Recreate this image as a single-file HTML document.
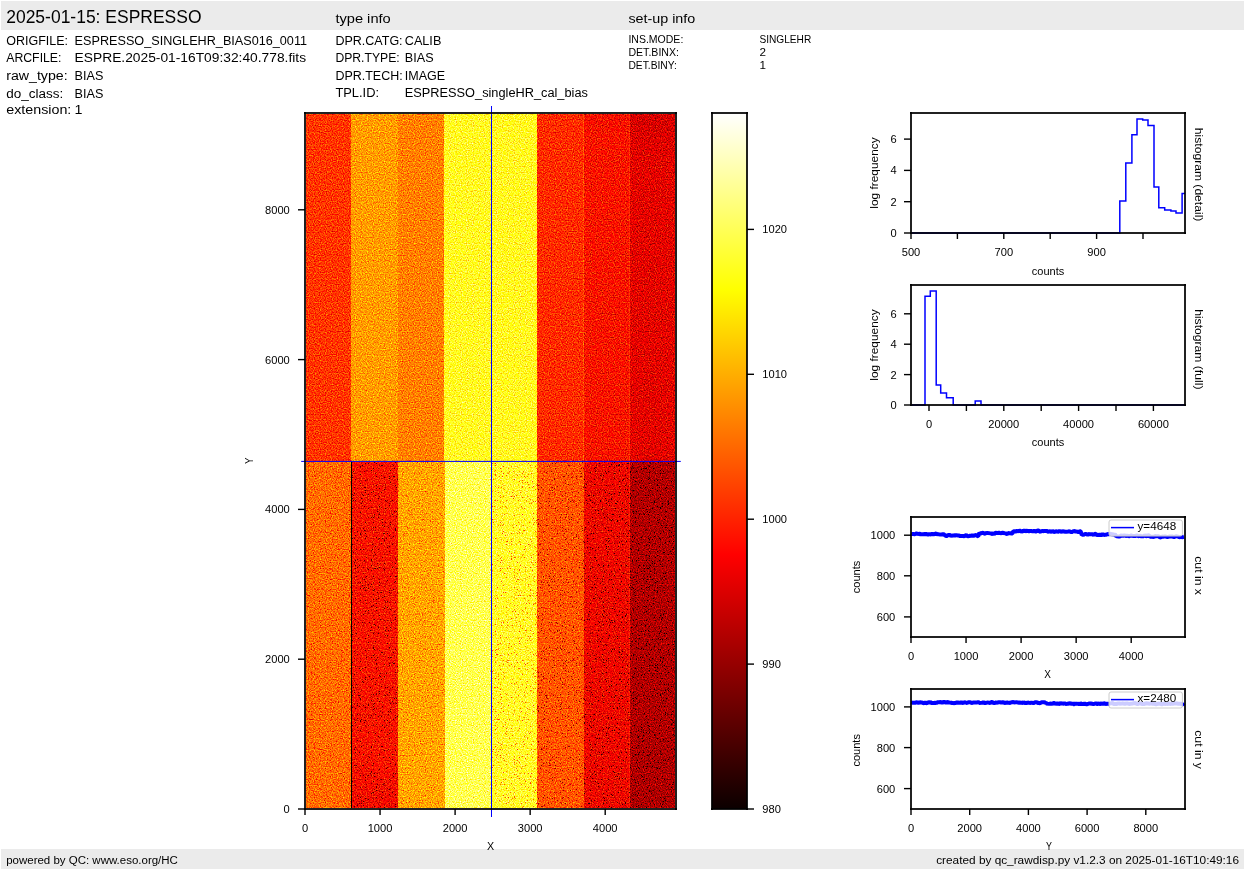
<!DOCTYPE html>
<html><head><meta charset="utf-8"><title>ESPRESSO raw display</title>
<style>
html,body{margin:0;padding:0;background:#fff;}
body{width:1245px;height:870px;overflow:hidden;}
svg{display:block;will-change:transform;}
text{font-family:"Liberation Sans",sans-serif;}
</style></head><body>
<svg width="1245" height="870" viewBox="0 0 1245 870">
<rect x="0" y="0" width="1245" height="870" fill="#fff"/>
<rect x="1" y="1" width="1243" height="29" fill="#ebebeb"/>
<rect x="1" y="849" width="1243" height="20" fill="#ebebeb"/>
<text x="6.20" y="23.00" font-size="17.67" text-anchor="start" textLength="195.36" lengthAdjust="spacingAndGlyphs" fill="#000">2025-01-15: ESPRESSO</text>
<text x="335.40" y="22.80" font-size="13.25" text-anchor="start" textLength="55.34" lengthAdjust="spacingAndGlyphs" fill="#000">type info</text>
<text x="628.40" y="22.70" font-size="13.25" text-anchor="start" textLength="66.89" lengthAdjust="spacingAndGlyphs" fill="#000">set-up info</text>
<text x="6.20" y="44.90" font-size="13.25" text-anchor="start" textLength="61.85" lengthAdjust="spacingAndGlyphs" fill="#000">ORIGFILE:</text>
<text x="74.60" y="44.90" font-size="13.25" text-anchor="start" textLength="232.43" lengthAdjust="spacingAndGlyphs" fill="#000">ESPRESSO_SINGLEHR_BIAS016_0011</text>
<text x="6.20" y="61.90" font-size="13.25" text-anchor="start" textLength="55.29" lengthAdjust="spacingAndGlyphs" fill="#000">ARCFILE:</text>
<text x="74.60" y="61.90" font-size="13.25" text-anchor="start" textLength="231.44" lengthAdjust="spacingAndGlyphs" fill="#000">ESPRE.2025-01-16T09:32:40.778.fits</text>
<text x="6.20" y="79.80" font-size="13.25" text-anchor="start" textLength="61.41" lengthAdjust="spacingAndGlyphs" fill="#000">raw_type:</text>
<text x="74.60" y="79.80" font-size="13.25" text-anchor="start" textLength="28.75" lengthAdjust="spacingAndGlyphs" fill="#000">BIAS</text>
<text x="6.20" y="97.80" font-size="13.25" text-anchor="start" textLength="57.07" lengthAdjust="spacingAndGlyphs" fill="#000">do_class:</text>
<text x="74.60" y="97.80" font-size="13.25" text-anchor="start" textLength="28.75" lengthAdjust="spacingAndGlyphs" fill="#000">BIAS</text>
<text x="6.20" y="113.90" font-size="13.25" text-anchor="start" textLength="65.15" lengthAdjust="spacingAndGlyphs" fill="#000">extension:</text>
<text x="74.60" y="113.90" font-size="13.25" text-anchor="start" textLength="7.95" lengthAdjust="spacingAndGlyphs" fill="#000">1</text>
<text x="335.40" y="45.10" font-size="13.25" text-anchor="start" textLength="67.22" lengthAdjust="spacingAndGlyphs" fill="#000">DPR.CATG:</text>
<text x="404.80" y="45.10" font-size="13.25" text-anchor="start" textLength="36.51" lengthAdjust="spacingAndGlyphs" fill="#000">CALIB</text>
<text x="335.40" y="61.80" font-size="13.25" text-anchor="start" textLength="64.29" lengthAdjust="spacingAndGlyphs" fill="#000">DPR.TYPE:</text>
<text x="404.80" y="61.80" font-size="13.25" text-anchor="start" textLength="28.75" lengthAdjust="spacingAndGlyphs" fill="#000">BIAS</text>
<text x="335.40" y="80.10" font-size="13.25" text-anchor="start" textLength="67.25" lengthAdjust="spacingAndGlyphs" fill="#000">DPR.TECH:</text>
<text x="404.80" y="80.10" font-size="13.25" text-anchor="start" textLength="40.39" lengthAdjust="spacingAndGlyphs" fill="#000">IMAGE</text>
<text x="335.40" y="96.90" font-size="13.25" text-anchor="start" textLength="43.63" lengthAdjust="spacingAndGlyphs" fill="#000">TPL.ID:</text>
<text x="404.80" y="96.90" font-size="13.25" text-anchor="start" textLength="183.09" lengthAdjust="spacingAndGlyphs" fill="#000">ESPRESSO_singleHR_cal_bias</text>
<text x="628.40" y="43.00" font-size="10.81" text-anchor="start" textLength="54.92" lengthAdjust="spacingAndGlyphs" fill="#000">INS.MODE:</text>
<text x="759.40" y="43.00" font-size="10.81" text-anchor="start" textLength="51.90" lengthAdjust="spacingAndGlyphs" fill="#000">SINGLEHR</text>
<text x="628.40" y="55.90" font-size="10.81" text-anchor="start" textLength="50.62" lengthAdjust="spacingAndGlyphs" fill="#000">DET.BINX:</text>
<text x="759.40" y="55.90" font-size="10.81" text-anchor="start" textLength="6.49" lengthAdjust="spacingAndGlyphs" fill="#000">2</text>
<text x="628.40" y="68.80" font-size="10.81" text-anchor="start" textLength="48.51" lengthAdjust="spacingAndGlyphs" fill="#000">DET.BINY:</text>
<text x="759.40" y="68.80" font-size="10.81" text-anchor="start" textLength="6.49" lengthAdjust="spacingAndGlyphs" fill="#000">1</text>
<text x="6.20" y="864.00" font-size="11.05" text-anchor="start" textLength="171.69" lengthAdjust="spacingAndGlyphs" fill="#000">powered by QC: www.eso.org/HC</text>
<text x="1239.00" y="863.80" font-size="11.05" text-anchor="end" textLength="302.80" lengthAdjust="spacingAndGlyphs" fill="#000">created by qc_rawdisp.py v1.2.3 on 2025-01-16T10:49:16</text>
<defs><filter id="hm" x="306" y="114" width="369" height="694" filterUnits="userSpaceOnUse" color-interpolation-filters="sRGB"><feColorMatrix in="SourceGraphic" type="matrix" values="1 0 0 0 0  1 0 0 0 0  1 0 0 0 0  0 0 0 0 1" result="tt"/><feColorMatrix in="SourceGraphic" type="matrix" values="0 1 0 0 0  0 1 0 0 0  0 1 0 0 0  0 0 0 0 1" result="ss"/><feTurbulence type="fractalNoise" baseFrequency="0.83" numOctaves="1" seed="7" result="nz"/><feColorMatrix in="nz" type="matrix" values="1 0 0 0 0  1 0 0 0 0  1 0 0 0 0  0 0 0 0 1" result="ng"/><feComposite in="tt" in2="ng" operator="arithmetic" k1="0" k2="1" k3="0.55" k4="-0.2750" result="sum"/><feTurbulence type="fractalNoise" baseFrequency="1.37" numOctaves="1" seed="23" result="nz2"/><feColorMatrix in="nz2" type="matrix" values="0 25.0 0 0 -16.8  0 25.0 0 0 -16.8  0 25.0 0 0 -16.8  0 0 0 0 1" result="spk"/><feComposite in="spk" in2="ss" operator="arithmetic" k1="1" k2="0" k3="0" k4="0" result="spk2"/><feColorMatrix in="spk2" type="matrix" values="-1.0 0 0 0 1  -1.0 0 0 0 1  -1.0 0 0 0 1  0 0 0 0 1" result="mm"/><feComposite in="sum" in2="mm" operator="arithmetic" k1="1" k2="0" k3="0" k4="0" result="sum2"/><feComponentTransfer in="sum2"><feFuncR type="table" tableValues="0.0416 0.0621 0.0826 0.1031 0.1236 0.1441 0.1647 0.1852 0.2057 0.2262 0.2467 0.2672 0.2877 0.3082 0.3287 0.3492 0.3697 0.3903 0.4108 0.4313 0.4518 0.4723 0.4928 0.5133 0.5338 0.5543 0.5748 0.5954 0.6159 0.6364 0.6569 0.6774 0.6979 0.7184 0.7389 0.7594 0.7799 0.8004 0.8210 0.8415 0.8620 0.8825 0.9030 0.9235 0.9440 0.9645 0.9850 1.0000 1.0000 1.0000 1.0000 1.0000 1.0000 1.0000 1.0000 1.0000 1.0000 1.0000 1.0000 1.0000 1.0000 1.0000 1.0000 1.0000 1.0000 1.0000 1.0000 1.0000 1.0000 1.0000 1.0000 1.0000 1.0000 1.0000 1.0000 1.0000 1.0000 1.0000 1.0000 1.0000 1.0000 1.0000 1.0000 1.0000 1.0000 1.0000 1.0000 1.0000 1.0000 1.0000 1.0000 1.0000 1.0000 1.0000 1.0000 1.0000 1.0000 1.0000 1.0000 1.0000 1.0000 1.0000 1.0000 1.0000 1.0000 1.0000 1.0000 1.0000 1.0000 1.0000 1.0000 1.0000 1.0000 1.0000 1.0000 1.0000 1.0000 1.0000 1.0000 1.0000 1.0000 1.0000 1.0000 1.0000 1.0000 1.0000 1.0000 1.0000 1.0000"/><feFuncG type="table" tableValues="0.0000 0.0000 0.0000 0.0000 0.0000 0.0000 0.0000 0.0000 0.0000 0.0000 0.0000 0.0000 0.0000 0.0000 0.0000 0.0000 0.0000 0.0000 0.0000 0.0000 0.0000 0.0000 0.0000 0.0000 0.0000 0.0000 0.0000 0.0000 0.0000 0.0000 0.0000 0.0000 0.0000 0.0000 0.0000 0.0000 0.0000 0.0000 0.0000 0.0000 0.0000 0.0000 0.0000 0.0000 0.0000 0.0000 0.0000 0.0055 0.0260 0.0466 0.0671 0.0876 0.1081 0.1286 0.1491 0.1696 0.1901 0.2106 0.2311 0.2516 0.2721 0.2926 0.3132 0.3337 0.3542 0.3747 0.3952 0.4157 0.4362 0.4567 0.4772 0.4977 0.5182 0.5387 0.5592 0.5798 0.6003 0.6208 0.6413 0.6618 0.6823 0.7028 0.7233 0.7438 0.7643 0.7848 0.8053 0.8258 0.8464 0.8669 0.8874 0.9079 0.9284 0.9489 0.9694 0.9899 1.0000 1.0000 1.0000 1.0000 1.0000 1.0000 1.0000 1.0000 1.0000 1.0000 1.0000 1.0000 1.0000 1.0000 1.0000 1.0000 1.0000 1.0000 1.0000 1.0000 1.0000 1.0000 1.0000 1.0000 1.0000 1.0000 1.0000 1.0000 1.0000 1.0000 1.0000 1.0000 1.0000"/><feFuncB type="table" tableValues="0.0000 0.0000 0.0000 0.0000 0.0000 0.0000 0.0000 0.0000 0.0000 0.0000 0.0000 0.0000 0.0000 0.0000 0.0000 0.0000 0.0000 0.0000 0.0000 0.0000 0.0000 0.0000 0.0000 0.0000 0.0000 0.0000 0.0000 0.0000 0.0000 0.0000 0.0000 0.0000 0.0000 0.0000 0.0000 0.0000 0.0000 0.0000 0.0000 0.0000 0.0000 0.0000 0.0000 0.0000 0.0000 0.0000 0.0000 0.0000 0.0000 0.0000 0.0000 0.0000 0.0000 0.0000 0.0000 0.0000 0.0000 0.0000 0.0000 0.0000 0.0000 0.0000 0.0000 0.0000 0.0000 0.0000 0.0000 0.0000 0.0000 0.0000 0.0000 0.0000 0.0000 0.0000 0.0000 0.0000 0.0000 0.0000 0.0000 0.0000 0.0000 0.0000 0.0000 0.0000 0.0000 0.0000 0.0000 0.0000 0.0000 0.0000 0.0000 0.0000 0.0000 0.0000 0.0000 0.0000 0.0156 0.0464 0.0771 0.1079 0.1387 0.1694 0.2002 0.2310 0.2617 0.2925 0.3232 0.3540 0.3848 0.4155 0.4463 0.4771 0.5078 0.5386 0.5693 0.6001 0.6309 0.6616 0.6924 0.7231 0.7539 0.7847 0.8154 0.8462 0.8770 0.9077 0.9385 0.9692 1.0000"/><feFuncA type="linear" slope="0" intercept="1"/></feComponentTransfer></filter></defs><g filter="url(#hm)"><rect x="306" y="114" width="45" height="348" fill="rgb(44.375%,8.000%,0%)"/><rect x="306" y="462" width="45" height="346" fill="rgb(53.125%,30.000%,0%)"/><rect x="351" y="114" width="47" height="348" fill="rgb(60.000%,5.000%,0%)"/><rect x="351" y="462" width="47" height="346" fill="rgb(38.542%,78.000%,0%)"/><rect x="398" y="114" width="46" height="348" fill="rgb(55.833%,8.000%,0%)"/><rect x="398" y="462" width="47" height="346" fill="rgb(61.458%,25.000%,0%)"/><rect x="444" y="114" width="47" height="348" fill="rgb(77.083%,3.000%,0%)"/><rect x="445" y="462" width="46" height="346" fill="rgb(83.333%,10.000%,0%)"/><rect x="491" y="114" width="46" height="348" fill="rgb(76.667%,3.000%,0%)"/><rect x="491" y="462" width="46" height="346" fill="rgb(78.125%,38.000%,0%)"/><rect x="537" y="114" width="47" height="348" fill="rgb(42.917%,10.000%,0%)"/><rect x="537" y="462" width="47" height="346" fill="rgb(49.583%,60.000%,0%)"/><rect x="584" y="114" width="46" height="348" fill="rgb(38.542%,15.000%,0%)"/><rect x="584" y="462" width="46" height="346" fill="rgb(35.417%,85.000%,0%)"/><rect x="630" y="114" width="45" height="348" fill="rgb(33.333%,22.000%,0%)"/><rect x="630" y="462" width="45" height="346" fill="rgb(25.000%,100.000%,0%)"/><rect x="583" y="114" width="1" height="348" fill="rgb(49.167%,10.000%,0%)"/><rect x="629" y="114" width="1" height="348" fill="rgb(43.750%,15.000%,0%)"/><rect x="629" y="462" width="1" height="346" fill="rgb(40.625%,85.000%,0%)"/><defs><linearGradient id="g21" x1="0" y1="0" x2="0" y2="1"><stop offset="0" stop-color="#000" stop-opacity="0.08"/><stop offset="1" stop-color="#000" stop-opacity="0"/></linearGradient></defs><rect x="630" y="114" width="45" height="51" fill="url(#g21)"/><defs><linearGradient id="g23" x1="0" y1="0" x2="0" y2="1"><stop offset="0" stop-color="#000" stop-opacity="0.03"/><stop offset="1" stop-color="#000" stop-opacity="0"/></linearGradient></defs><rect x="584" y="114" width="46" height="26" fill="url(#g23)"/><defs><linearGradient id="g25" x1="0" y1="0" x2="0" y2="1"><stop offset="0" stop-color="#000" stop-opacity="0"/><stop offset="1" stop-color="#000" stop-opacity="0.06"/></linearGradient></defs><rect x="352" y="760" width="46" height="48" fill="url(#g25)"/><defs><linearGradient id="g27" x1="0" y1="0" x2="0" y2="1"><stop offset="0" stop-color="#000" stop-opacity="0"/><stop offset="1" stop-color="#000" stop-opacity="0.03"/></linearGradient></defs><rect x="630" y="700" width="45" height="108" fill="url(#g27)"/></g>
<line x1="351.5" y1="461.5" x2="351.5" y2="808" stroke="#000" stroke-width="1.0"/>
<line x1="301.2" y1="461.4" x2="680.8" y2="461.4" stroke="#0000ff" stroke-width="1.0"/>
<line x1="491.5" y1="106" x2="491.5" y2="817" stroke="#0000ff" stroke-width="1.0"/>
<line x1="305" y1="112" x2="305" y2="810" stroke="#000" stroke-width="2" stroke-opacity="0.87"/>
<line x1="676" y1="112" x2="676" y2="810" stroke="#000" stroke-width="2" stroke-opacity="0.87"/>
<line x1="304" y1="113" x2="677" y2="113" stroke="#000" stroke-width="2" stroke-opacity="0.87"/>
<line x1="304" y1="809" x2="677" y2="809" stroke="#000" stroke-width="2" stroke-opacity="0.87"/>
<line x1="305.0" y1="809" x2="305.0" y2="815" stroke="#000" stroke-width="1.4"/>
<text x="305.00" y="831.80" font-size="10.30" text-anchor="middle" textLength="6.18" lengthAdjust="spacingAndGlyphs" fill="#000">0</text>
<line x1="380.05" y1="809" x2="380.05" y2="815" stroke="#000" stroke-width="1.4"/>
<text x="380.05" y="831.80" font-size="10.30" text-anchor="middle" textLength="24.74" lengthAdjust="spacingAndGlyphs" fill="#000">1000</text>
<line x1="455.1" y1="809" x2="455.1" y2="815" stroke="#000" stroke-width="1.4"/>
<text x="455.10" y="831.80" font-size="10.30" text-anchor="middle" textLength="24.74" lengthAdjust="spacingAndGlyphs" fill="#000">2000</text>
<line x1="530.15" y1="809" x2="530.15" y2="815" stroke="#000" stroke-width="1.4"/>
<text x="530.15" y="831.80" font-size="10.30" text-anchor="middle" textLength="24.74" lengthAdjust="spacingAndGlyphs" fill="#000">3000</text>
<line x1="605.2" y1="809" x2="605.2" y2="815" stroke="#000" stroke-width="1.4"/>
<text x="605.20" y="831.80" font-size="10.30" text-anchor="middle" textLength="24.74" lengthAdjust="spacingAndGlyphs" fill="#000">4000</text>
<line x1="298" y1="809.0" x2="305" y2="809.0" stroke="#000" stroke-width="1.4"/>
<text x="289.80" y="812.90" font-size="10.30" text-anchor="end" textLength="6.18" lengthAdjust="spacingAndGlyphs" fill="#000">0</text>
<line x1="298" y1="659.2" x2="305" y2="659.2" stroke="#000" stroke-width="1.4"/>
<text x="289.80" y="663.10" font-size="10.30" text-anchor="end" textLength="24.74" lengthAdjust="spacingAndGlyphs" fill="#000">2000</text>
<line x1="298" y1="509.4" x2="305" y2="509.4" stroke="#000" stroke-width="1.4"/>
<text x="289.80" y="513.30" font-size="10.30" text-anchor="end" textLength="24.74" lengthAdjust="spacingAndGlyphs" fill="#000">4000</text>
<line x1="298" y1="359.59999999999997" x2="305" y2="359.59999999999997" stroke="#000" stroke-width="1.4"/>
<text x="289.80" y="363.50" font-size="10.30" text-anchor="end" textLength="24.74" lengthAdjust="spacingAndGlyphs" fill="#000">6000</text>
<line x1="298" y1="209.79999999999995" x2="305" y2="209.79999999999995" stroke="#000" stroke-width="1.4"/>
<text x="289.80" y="213.70" font-size="10.30" text-anchor="end" textLength="24.74" lengthAdjust="spacingAndGlyphs" fill="#000">8000</text>
<text x="490.60" y="849.70" font-size="11.05" text-anchor="middle" textLength="7.14" lengthAdjust="spacingAndGlyphs" fill="#000">X</text>
<text x="252.80" y="460.80" font-size="11.05" text-anchor="middle" textLength="6.36" lengthAdjust="spacingAndGlyphs" fill="#000" transform="rotate(-90 252.8 460.8)">Y</text>
<defs><linearGradient id="hot" x1="0" y1="1" x2="0" y2="0"><stop offset="0" stop-color="#0b0000"/><stop offset="0.365" stop-color="#ff0000"/><stop offset="0.746" stop-color="#ffff00"/><stop offset="1" stop-color="#ffffff"/></linearGradient></defs>
<rect x="712" y="113" width="35" height="696" fill="url(#hot)"/>
<line x1="712" y1="112" x2="712" y2="810" stroke="#000" stroke-width="2" stroke-opacity="0.87"/>
<line x1="747" y1="112" x2="747" y2="810" stroke="#000" stroke-width="2" stroke-opacity="0.87"/>
<line x1="711" y1="113" x2="748" y2="113" stroke="#000" stroke-width="2" stroke-opacity="0.87"/>
<line x1="711" y1="809" x2="748" y2="809" stroke="#000" stroke-width="2" stroke-opacity="0.87"/>
<line x1="747" y1="809.0" x2="754" y2="809.0" stroke="#000" stroke-width="1.4"/>
<text x="762.30" y="812.90" font-size="10.30" text-anchor="start" textLength="18.55" lengthAdjust="spacingAndGlyphs" fill="#000">980</text>
<line x1="747" y1="664.1" x2="754" y2="664.1" stroke="#000" stroke-width="1.4"/>
<text x="762.30" y="668.00" font-size="10.30" text-anchor="start" textLength="18.55" lengthAdjust="spacingAndGlyphs" fill="#000">990</text>
<line x1="747" y1="519.2" x2="754" y2="519.2" stroke="#000" stroke-width="1.4"/>
<text x="762.30" y="523.10" font-size="10.30" text-anchor="start" textLength="24.74" lengthAdjust="spacingAndGlyphs" fill="#000">1000</text>
<line x1="747" y1="374.29999999999995" x2="754" y2="374.29999999999995" stroke="#000" stroke-width="1.4"/>
<text x="762.30" y="378.20" font-size="10.30" text-anchor="start" textLength="24.74" lengthAdjust="spacingAndGlyphs" fill="#000">1010</text>
<line x1="747" y1="229.39999999999998" x2="754" y2="229.39999999999998" stroke="#000" stroke-width="1.4"/>
<text x="762.30" y="233.30" font-size="10.30" text-anchor="start" textLength="24.74" lengthAdjust="spacingAndGlyphs" fill="#000">1020</text>
<polyline fill="none" stroke="#0000ff" stroke-width="1.5" points="911,233 1119.8,233 1119.8,201.1 1125.8,201.1 1125.8,163 1131.9,163 1131.9,134.8 1137,134.8 1137,119 1142.7,119 1142.7,120 1148,120 1148,125.6 1154,125.6 1154,187.1 1158.8,187.1 1158.8,207.7 1164.7,207.7 1164.7,210 1170.9,210 1170.9,211 1176,211 1176,212.9 1182.1,212.9 1182.1,193.6 1185,193.6"/>
<line x1="911" y1="112" x2="911" y2="234" stroke="#000" stroke-width="2" stroke-opacity="0.87"/>
<line x1="1185" y1="112" x2="1185" y2="234" stroke="#000" stroke-width="2" stroke-opacity="0.87"/>
<line x1="910" y1="113" x2="1186" y2="113" stroke="#000" stroke-width="2" stroke-opacity="0.87"/>
<line x1="910" y1="233" x2="1186" y2="233" stroke="#000" stroke-width="2" stroke-opacity="0.87"/>
<line x1="904" y1="233.0" x2="911" y2="233.0" stroke="#000" stroke-width="1.4"/>
<text x="896.80" y="236.90" font-size="10.30" text-anchor="end" textLength="6.18" lengthAdjust="spacingAndGlyphs" fill="#000">0</text>
<line x1="904" y1="201.7" x2="911" y2="201.7" stroke="#000" stroke-width="1.4"/>
<text x="896.80" y="205.60" font-size="10.30" text-anchor="end" textLength="6.18" lengthAdjust="spacingAndGlyphs" fill="#000">2</text>
<line x1="904" y1="170.4" x2="911" y2="170.4" stroke="#000" stroke-width="1.4"/>
<text x="896.80" y="174.30" font-size="10.30" text-anchor="end" textLength="6.18" lengthAdjust="spacingAndGlyphs" fill="#000">4</text>
<line x1="904" y1="139.1" x2="911" y2="139.1" stroke="#000" stroke-width="1.4"/>
<text x="896.80" y="143.00" font-size="10.30" text-anchor="end" textLength="6.18" lengthAdjust="spacingAndGlyphs" fill="#000">6</text>
<line x1="911.0" y1="233" x2="911.0" y2="239" stroke="#000" stroke-width="1.4"/>
<text x="911.00" y="256.30" font-size="10.30" text-anchor="middle" textLength="18.55" lengthAdjust="spacingAndGlyphs" fill="#000">500</text>
<line x1="957.4" y1="233" x2="957.4" y2="239" stroke="#000" stroke-width="1.4"/>
<line x1="1003.8" y1="233" x2="1003.8" y2="239" stroke="#000" stroke-width="1.4"/>
<text x="1003.80" y="256.30" font-size="10.30" text-anchor="middle" textLength="18.55" lengthAdjust="spacingAndGlyphs" fill="#000">700</text>
<line x1="1050.2" y1="233" x2="1050.2" y2="239" stroke="#000" stroke-width="1.4"/>
<line x1="1096.6" y1="233" x2="1096.6" y2="239" stroke="#000" stroke-width="1.4"/>
<text x="1096.60" y="256.30" font-size="10.30" text-anchor="middle" textLength="18.55" lengthAdjust="spacingAndGlyphs" fill="#000">900</text>
<line x1="1143.0" y1="233" x2="1143.0" y2="239" stroke="#000" stroke-width="1.4"/>
<text x="1048.00" y="275.00" font-size="10.30" text-anchor="middle" textLength="32.49" lengthAdjust="spacingAndGlyphs" fill="#000">counts</text>
<text x="877.60" y="173.00" font-size="11.05" text-anchor="middle" textLength="71.46" lengthAdjust="spacingAndGlyphs" fill="#000" transform="rotate(-90 877.6 173.0)">log frequency</text>
<text x="1195.00" y="174.60" font-size="11.05" text-anchor="middle" textLength="93.55" lengthAdjust="spacingAndGlyphs" fill="#000" transform="rotate(90 1195.0 174.6)">histogram (detail)</text>
<polyline fill="none" stroke="#0000ff" stroke-width="1.5" points="911,405 925,405 925,296.2 930.3,296.2 930.3,291.1 936.2,291.1 936.2,384.9 940.7,384.9 940.7,392.9 946.5,392.9 946.5,397.8 953.2,397.8 953.2,405 975.2,405 975.2,401.1 981,401.1 981,405 1185,405"/>
<line x1="911" y1="284" x2="911" y2="406" stroke="#000" stroke-width="2" stroke-opacity="0.87"/>
<line x1="1185" y1="284" x2="1185" y2="406" stroke="#000" stroke-width="2" stroke-opacity="0.87"/>
<line x1="910" y1="285" x2="1186" y2="285" stroke="#000" stroke-width="2" stroke-opacity="0.87"/>
<line x1="910" y1="405" x2="1186" y2="405" stroke="#000" stroke-width="2" stroke-opacity="0.87"/>
<line x1="904" y1="405.0" x2="911" y2="405.0" stroke="#000" stroke-width="1.4"/>
<text x="896.80" y="408.90" font-size="10.30" text-anchor="end" textLength="6.18" lengthAdjust="spacingAndGlyphs" fill="#000">0</text>
<line x1="904" y1="374.6" x2="911" y2="374.6" stroke="#000" stroke-width="1.4"/>
<text x="896.80" y="378.50" font-size="10.30" text-anchor="end" textLength="6.18" lengthAdjust="spacingAndGlyphs" fill="#000">2</text>
<line x1="904" y1="344.2" x2="911" y2="344.2" stroke="#000" stroke-width="1.4"/>
<text x="896.80" y="348.10" font-size="10.30" text-anchor="end" textLength="6.18" lengthAdjust="spacingAndGlyphs" fill="#000">4</text>
<line x1="904" y1="313.8" x2="911" y2="313.8" stroke="#000" stroke-width="1.4"/>
<text x="896.80" y="317.70" font-size="10.30" text-anchor="end" textLength="6.18" lengthAdjust="spacingAndGlyphs" fill="#000">6</text>
<line x1="929.0" y1="405" x2="929.0" y2="411" stroke="#000" stroke-width="1.4"/>
<text x="929.00" y="427.80" font-size="10.30" text-anchor="middle" textLength="6.18" lengthAdjust="spacingAndGlyphs" fill="#000">0</text>
<line x1="966.4" y1="405" x2="966.4" y2="411" stroke="#000" stroke-width="1.4"/>
<line x1="1003.8" y1="405" x2="1003.8" y2="411" stroke="#000" stroke-width="1.4"/>
<text x="1003.80" y="427.80" font-size="10.30" text-anchor="middle" textLength="30.92" lengthAdjust="spacingAndGlyphs" fill="#000">20000</text>
<line x1="1041.2" y1="405" x2="1041.2" y2="411" stroke="#000" stroke-width="1.4"/>
<line x1="1078.6" y1="405" x2="1078.6" y2="411" stroke="#000" stroke-width="1.4"/>
<text x="1078.60" y="427.80" font-size="10.30" text-anchor="middle" textLength="30.92" lengthAdjust="spacingAndGlyphs" fill="#000">40000</text>
<line x1="1116.0" y1="405" x2="1116.0" y2="411" stroke="#000" stroke-width="1.4"/>
<line x1="1153.4" y1="405" x2="1153.4" y2="411" stroke="#000" stroke-width="1.4"/>
<text x="1153.40" y="427.80" font-size="10.30" text-anchor="middle" textLength="30.92" lengthAdjust="spacingAndGlyphs" fill="#000">60000</text>
<text x="1048.00" y="446.00" font-size="10.30" text-anchor="middle" textLength="32.49" lengthAdjust="spacingAndGlyphs" fill="#000">counts</text>
<text x="877.60" y="345.00" font-size="11.05" text-anchor="middle" textLength="71.46" lengthAdjust="spacingAndGlyphs" fill="#000" transform="rotate(-90 877.6 345.0)">log frequency</text>
<text x="1195.00" y="349.30" font-size="11.05" text-anchor="middle" textLength="80.33" lengthAdjust="spacingAndGlyphs" fill="#000" transform="rotate(90 1195.0 349.3)">histogram (full)</text>
<polyline fill="none" stroke="#0000ff" stroke-width="4" stroke-linejoin="bevel" points="911.0,533.7 912.0,534.1 913.0,533.9 914.0,534.2 915.0,534.3 916.0,533.5 917.0,533.4 918.0,534.5 919.0,533.7 920.0,533.7 921.0,534.8 922.0,534.0 923.0,534.5 924.0,534.0 925.0,534.3 926.0,533.6 927.0,534.3 928.0,534.6 929.1,534.1 930.1,534.4 931.1,534.3 932.1,533.5 933.1,534.4 934.1,534.2 935.1,533.8 936.1,533.4 937.1,534.6 938.1,534.0 939.1,534.4 940.1,534.6 941.1,534.4 942.1,534.7 943.1,533.9 944.1,534.5 945.1,535.4 946.1,536.1 947.1,536.0 948.1,534.9 949.1,535.0 950.1,535.1 951.1,536.2 952.1,535.4 953.1,535.7 954.2,535.2 955.2,535.5 956.2,535.3 957.2,535.3 958.2,535.6 959.2,535.6 960.2,536.1 961.2,535.8 962.2,536.1 963.2,536.0 964.2,536.2 965.2,535.7 966.2,535.0 967.2,536.0 968.2,536.2 969.2,536.1 970.2,535.6 971.3,535.8 972.3,535.1 973.3,536.0 974.3,535.6 975.3,535.2 976.3,534.9 977.3,536.0 978.3,536.2 979.3,532.7 980.3,533.7 981.3,533.1 982.3,532.8 983.3,533.0 984.3,533.6 985.3,533.8 986.3,532.6 987.3,533.4 988.3,532.6 989.3,533.6 990.3,533.0 991.3,533.8 992.3,533.9 993.3,533.3 994.3,534.0 995.3,533.0 996.3,532.7 997.4,533.4 998.4,532.6 999.4,532.8 1000.4,533.1 1001.4,533.4 1002.4,532.8 1003.4,532.6 1004.4,533.8 1005.4,533.0 1006.4,533.9 1007.4,533.8 1008.4,533.1 1009.4,533.2 1010.4,533.3 1011.4,533.5 1012.4,533.4 1013.4,531.2 1014.4,531.3 1015.4,531.7 1016.4,531.1 1017.4,531.0 1018.4,531.4 1019.4,530.7 1020.4,530.8 1021.4,531.8 1022.4,531.1 1023.4,531.2 1024.4,530.4 1025.4,531.0 1026.4,531.2 1027.4,530.4 1028.4,531.3 1029.4,531.3 1030.5,530.5 1031.5,531.3 1032.5,531.1 1033.5,531.4 1034.5,530.9 1035.5,531.4 1036.5,531.4 1037.5,530.4 1038.5,530.5 1039.5,531.4 1040.5,531.8 1041.5,530.8 1042.5,531.1 1043.5,531.2 1044.5,530.9 1045.5,530.9 1046.5,530.9 1047.5,531.4 1048.5,531.8 1049.5,531.3 1050.5,531.5 1051.5,532.0 1052.5,531.0 1053.5,531.7 1054.5,532.0 1055.5,531.4 1056.6,531.2 1057.6,532.1 1058.6,531.3 1059.6,531.2 1060.6,531.5 1061.6,531.9 1062.6,531.1 1063.6,531.4 1064.6,531.4 1065.6,532.1 1066.6,531.5 1067.6,532.1 1068.6,531.2 1069.6,531.4 1070.6,531.8 1071.6,532.2 1072.6,531.6 1073.7,531.2 1074.7,531.1 1075.7,531.7 1076.7,531.2 1077.7,532.1 1078.7,532.1 1079.7,531.2 1080.7,531.3 1081.7,534.9 1082.7,534.6 1083.7,534.9 1084.7,534.2 1085.7,533.9 1086.7,534.1 1087.7,534.8 1088.7,534.1 1089.7,534.2 1090.7,534.3 1091.7,534.3 1092.7,534.3 1093.7,535.0 1094.7,533.9 1095.7,533.7 1096.7,535.0 1097.7,535.0 1098.8,535.1 1099.8,534.3 1100.8,535.1 1101.8,535.0 1102.8,534.0 1103.8,534.8 1104.8,534.9 1105.8,534.7 1106.8,534.5 1107.8,534.1 1108.8,534.2 1109.8,534.0 1110.8,533.8 1111.8,534.5 1112.8,534.1 1113.8,534.9 1114.8,533.8 1115.8,536.4 1116.8,536.1 1117.8,536.4 1118.8,536.4 1119.8,536.4 1120.8,535.9 1121.8,535.1 1122.8,536.2 1123.8,535.4 1124.8,535.5 1125.8,536.0 1126.8,535.8 1127.8,535.7 1128.8,536.4 1129.8,536.0 1130.8,535.6 1131.8,535.5 1132.8,536.3 1133.9,535.8 1134.9,536.2 1135.9,535.6 1136.9,535.4 1137.9,535.9 1138.9,536.3 1139.9,535.4 1140.9,536.2 1141.9,536.4 1142.9,536.2 1143.9,536.3 1144.9,535.1 1145.9,536.0 1146.9,536.3 1147.9,535.2 1148.9,535.5 1149.9,536.5 1150.9,536.9 1151.9,536.7 1152.9,536.8 1153.9,537.2 1154.9,536.1 1155.9,536.2 1156.9,536.3 1157.9,536.3 1158.9,536.2 1159.9,537.5 1160.9,537.3 1161.9,536.3 1162.9,536.8 1163.9,536.6 1164.9,536.6 1165.9,536.6 1166.9,537.0 1168.0,537.0 1169.0,536.6 1170.0,536.4 1171.0,536.6 1172.0,536.3 1173.0,536.9 1174.0,537.1 1175.0,536.7 1176.0,536.2 1177.0,536.4 1178.0,536.7 1179.0,537.0 1180.0,537.2 1181.0,536.7 1182.0,537.3 1183.0,537.0 1184.0,536.7"/>
<line x1="911" y1="516" x2="911" y2="638" stroke="#000" stroke-width="2" stroke-opacity="0.87"/>
<line x1="1185" y1="516" x2="1185" y2="638" stroke="#000" stroke-width="2" stroke-opacity="0.87"/>
<line x1="910" y1="517" x2="1186" y2="517" stroke="#000" stroke-width="2" stroke-opacity="0.87"/>
<line x1="910" y1="637" x2="1186" y2="637" stroke="#000" stroke-width="2" stroke-opacity="0.87"/>
<line x1="904" y1="535.2" x2="911" y2="535.2" stroke="#000" stroke-width="1.4"/>
<text x="895.30" y="539.10" font-size="10.30" text-anchor="end" textLength="24.74" lengthAdjust="spacingAndGlyphs" fill="#000">1000</text>
<line x1="904" y1="575.8" x2="911" y2="575.8" stroke="#000" stroke-width="1.4"/>
<text x="895.30" y="579.70" font-size="10.30" text-anchor="end" textLength="18.55" lengthAdjust="spacingAndGlyphs" fill="#000">800</text>
<line x1="904" y1="616.9" x2="911" y2="616.9" stroke="#000" stroke-width="1.4"/>
<text x="895.30" y="620.80" font-size="10.30" text-anchor="end" textLength="18.55" lengthAdjust="spacingAndGlyphs" fill="#000">600</text>
<line x1="911.0" y1="637" x2="911.0" y2="643" stroke="#000" stroke-width="1.4"/>
<text x="911.00" y="660.00" font-size="10.30" text-anchor="middle" textLength="6.18" lengthAdjust="spacingAndGlyphs" fill="#000">0</text>
<line x1="966.05" y1="637" x2="966.05" y2="643" stroke="#000" stroke-width="1.4"/>
<text x="966.05" y="660.00" font-size="10.30" text-anchor="middle" textLength="24.74" lengthAdjust="spacingAndGlyphs" fill="#000">1000</text>
<line x1="1021.1" y1="637" x2="1021.1" y2="643" stroke="#000" stroke-width="1.4"/>
<text x="1021.10" y="660.00" font-size="10.30" text-anchor="middle" textLength="24.74" lengthAdjust="spacingAndGlyphs" fill="#000">2000</text>
<line x1="1076.15" y1="637" x2="1076.15" y2="643" stroke="#000" stroke-width="1.4"/>
<text x="1076.15" y="660.00" font-size="10.30" text-anchor="middle" textLength="24.74" lengthAdjust="spacingAndGlyphs" fill="#000">3000</text>
<line x1="1131.2" y1="637" x2="1131.2" y2="643" stroke="#000" stroke-width="1.4"/>
<text x="1131.20" y="660.00" font-size="10.30" text-anchor="middle" textLength="24.74" lengthAdjust="spacingAndGlyphs" fill="#000">4000</text>
<text x="1047.50" y="678.00" font-size="10.30" text-anchor="middle" textLength="6.66" lengthAdjust="spacingAndGlyphs" fill="#000">X</text>
<text x="859.60" y="577.00" font-size="10.30" text-anchor="middle" textLength="32.49" lengthAdjust="spacingAndGlyphs" fill="#000" transform="rotate(-90 859.6 577.0)">counts</text>
<text x="1195.00" y="575.60" font-size="11.05" text-anchor="middle" textLength="38.71" lengthAdjust="spacingAndGlyphs" fill="#000" transform="rotate(90 1195.0 575.6)">cut in x</text>
<rect x="1109" y="520" width="73.4" height="16" rx="2" fill="#fff" fill-opacity="0.8" stroke="#cccccc" stroke-width="1"/>
<line x1="1111" y1="527.6" x2="1134" y2="527.6" stroke="#0000ff" stroke-width="1.5"/>
<text x="1137.50" y="530.20" font-size="10.30" text-anchor="start" textLength="38.63" lengthAdjust="spacingAndGlyphs" fill="#000">y=4648</text>
<polyline fill="none" stroke="#0000ff" stroke-width="4" stroke-linejoin="bevel" points="911.0,702.4 912.0,702.6 913.0,702.9 914.0,702.5 915.0,702.9 916.0,702.5 917.0,702.2 918.0,702.7 919.0,702.9 920.0,702.0 921.0,702.5 922.0,702.5 923.0,703.1 924.0,703.2 925.1,702.4 926.1,703.2 927.1,703.0 928.1,702.3 929.1,702.5 930.1,702.1 931.1,703.0 932.1,702.8 933.1,703.1 934.1,703.0 935.1,702.8 936.1,702.9 937.1,702.7 938.1,702.0 939.1,702.7 940.1,701.9 941.1,702.1 942.1,703.0 943.1,702.0 944.1,702.0 945.1,702.0 946.1,703.1 947.1,702.2 948.1,701.9 949.1,703.1 950.1,702.1 951.1,703.1 952.2,702.8 953.2,703.1 954.2,703.2 955.2,702.7 956.2,703.0 957.2,702.0 958.2,703.0 959.2,702.6 960.2,702.9 961.2,702.0 962.2,702.9 963.2,703.2 964.2,702.0 965.2,702.4 966.2,702.7 967.2,703.1 968.2,702.2 969.2,702.2 970.2,702.2 971.2,702.8 972.2,703.0 973.2,702.5 974.2,702.4 975.2,702.5 976.2,702.4 977.2,702.5 978.2,702.0 979.2,702.6 980.3,703.3 981.3,702.5 982.3,702.9 983.3,702.1 984.3,702.9 985.3,703.0 986.3,702.8 987.3,702.6 988.3,702.6 989.3,702.8 990.3,703.2 991.3,702.1 992.3,702.0 993.3,702.9 994.3,703.2 995.3,702.6 996.3,702.5 997.3,702.9 998.3,702.2 999.3,702.3 1000.3,702.2 1001.3,702.7 1002.3,702.3 1003.3,702.2 1004.3,702.9 1005.3,703.2 1006.3,702.3 1007.4,702.9 1008.4,702.5 1009.4,703.1 1010.4,702.7 1011.4,702.3 1012.4,702.2 1013.4,701.9 1014.4,702.6 1015.4,702.4 1016.4,702.1 1017.4,702.4 1018.4,702.4 1019.4,703.0 1020.4,702.1 1021.4,703.3 1022.4,702.6 1023.4,702.7 1024.4,702.6 1025.4,703.1 1026.4,703.1 1027.4,702.7 1028.4,702.6 1029.4,702.9 1030.4,703.1 1031.4,702.5 1032.4,702.9 1033.4,703.2 1034.5,702.6 1035.5,702.2 1036.5,702.2 1037.5,702.9 1038.5,702.8 1039.5,703.2 1040.5,703.1 1041.5,702.2 1042.5,702.2 1043.5,702.3 1044.5,702.2 1045.5,702.9 1046.5,703.1 1047.5,704.3 1048.5,703.4 1049.5,704.2 1050.5,703.4 1051.5,703.6 1052.5,704.0 1053.5,703.1 1054.5,703.1 1055.5,704.2 1056.5,703.4 1057.5,703.5 1058.5,703.8 1059.5,703.9 1060.5,703.0 1061.6,703.5 1062.6,703.6 1063.6,703.7 1064.6,703.3 1065.6,703.8 1066.6,704.3 1067.6,703.5 1068.6,703.8 1069.6,703.2 1070.6,703.4 1071.6,703.9 1072.6,703.2 1073.6,704.2 1074.6,704.3 1075.6,703.1 1076.6,704.3 1077.6,703.5 1078.6,704.1 1079.6,704.1 1080.6,703.4 1081.6,703.9 1082.6,703.9 1083.6,704.1 1084.6,703.4 1085.6,704.1 1086.6,704.3 1087.6,703.9 1088.6,703.8 1089.7,703.2 1090.7,703.7 1091.7,703.5 1092.7,704.0 1093.7,703.9 1094.7,703.8 1095.7,703.3 1096.7,703.9 1097.7,703.9 1098.7,703.3 1099.7,704.2 1100.7,703.9 1101.7,703.2 1102.7,704.3 1103.7,703.2 1104.7,703.5 1105.7,704.0 1106.7,703.8 1107.7,703.8 1108.7,703.9 1109.7,703.6 1110.7,703.4 1111.7,703.2 1112.7,703.1 1113.7,704.0 1114.7,704.1 1115.7,703.8 1116.8,704.0 1117.8,703.5 1118.8,703.4 1119.8,703.5 1120.8,704.2 1121.8,703.1 1122.8,703.7 1123.8,703.3 1124.8,704.1 1125.8,703.5 1126.8,703.5 1127.8,703.6 1128.8,703.8 1129.8,704.1 1130.8,703.5 1131.8,704.2 1132.8,703.2 1133.8,703.4 1134.8,703.1 1135.8,703.2 1136.8,704.1 1137.8,704.0 1138.8,703.3 1139.8,703.3 1140.8,703.6 1141.8,704.0 1142.8,704.1 1143.9,704.0 1144.9,703.8 1145.9,703.2 1146.9,703.6 1147.9,703.3 1148.9,703.7 1149.9,703.8 1150.9,703.3 1151.9,703.4 1152.9,704.1 1153.9,703.0 1154.9,704.1 1155.9,704.2 1156.9,704.3 1157.9,703.5 1158.9,703.8 1159.9,703.8 1160.9,703.9 1161.9,704.4 1162.9,704.0 1163.9,703.4 1164.9,704.2 1165.9,703.7 1166.9,703.8 1167.9,704.0 1168.9,703.0 1169.9,704.1 1170.9,703.9 1172.0,703.7 1173.0,703.7 1174.0,703.6 1175.0,703.3 1176.0,703.7 1177.0,703.1 1178.0,703.7 1179.0,703.9 1180.0,703.6 1181.0,703.8 1182.0,704.3 1183.0,704.2 1184.0,703.2"/>
<line x1="911" y1="688" x2="911" y2="810" stroke="#000" stroke-width="2" stroke-opacity="0.87"/>
<line x1="1185" y1="688" x2="1185" y2="810" stroke="#000" stroke-width="2" stroke-opacity="0.87"/>
<line x1="910" y1="689" x2="1186" y2="689" stroke="#000" stroke-width="2" stroke-opacity="0.87"/>
<line x1="910" y1="809" x2="1186" y2="809" stroke="#000" stroke-width="2" stroke-opacity="0.87"/>
<line x1="904" y1="706.9" x2="911" y2="706.9" stroke="#000" stroke-width="1.4"/>
<text x="895.30" y="710.80" font-size="10.30" text-anchor="end" textLength="24.74" lengthAdjust="spacingAndGlyphs" fill="#000">1000</text>
<line x1="904" y1="747.6" x2="911" y2="747.6" stroke="#000" stroke-width="1.4"/>
<text x="895.30" y="751.50" font-size="10.30" text-anchor="end" textLength="18.55" lengthAdjust="spacingAndGlyphs" fill="#000">800</text>
<line x1="904" y1="788.6" x2="911" y2="788.6" stroke="#000" stroke-width="1.4"/>
<text x="895.30" y="792.50" font-size="10.30" text-anchor="end" textLength="18.55" lengthAdjust="spacingAndGlyphs" fill="#000">600</text>
<line x1="911.0" y1="809" x2="911.0" y2="815" stroke="#000" stroke-width="1.4"/>
<text x="911.00" y="832.00" font-size="10.30" text-anchor="middle" textLength="6.18" lengthAdjust="spacingAndGlyphs" fill="#000">0</text>
<line x1="969.7" y1="809" x2="969.7" y2="815" stroke="#000" stroke-width="1.4"/>
<text x="969.70" y="832.00" font-size="10.30" text-anchor="middle" textLength="24.74" lengthAdjust="spacingAndGlyphs" fill="#000">2000</text>
<line x1="1028.4" y1="809" x2="1028.4" y2="815" stroke="#000" stroke-width="1.4"/>
<text x="1028.40" y="832.00" font-size="10.30" text-anchor="middle" textLength="24.74" lengthAdjust="spacingAndGlyphs" fill="#000">4000</text>
<line x1="1087.1" y1="809" x2="1087.1" y2="815" stroke="#000" stroke-width="1.4"/>
<text x="1087.10" y="832.00" font-size="10.30" text-anchor="middle" textLength="24.74" lengthAdjust="spacingAndGlyphs" fill="#000">6000</text>
<line x1="1145.8" y1="809" x2="1145.8" y2="815" stroke="#000" stroke-width="1.4"/>
<text x="1145.80" y="832.00" font-size="10.30" text-anchor="middle" textLength="24.74" lengthAdjust="spacingAndGlyphs" fill="#000">8000</text>
<text x="1049.00" y="849.60" font-size="10.30" text-anchor="middle" textLength="5.94" lengthAdjust="spacingAndGlyphs" fill="#000">Y</text>
<text x="859.60" y="750.30" font-size="10.30" text-anchor="middle" textLength="32.49" lengthAdjust="spacingAndGlyphs" fill="#000" transform="rotate(-90 859.6 750.3)">counts</text>
<text x="1195.00" y="749.60" font-size="11.05" text-anchor="middle" textLength="38.71" lengthAdjust="spacingAndGlyphs" fill="#000" transform="rotate(90 1195.0 749.6)">cut in y</text>
<rect x="1109" y="692" width="73.4" height="16" rx="2" fill="#fff" fill-opacity="0.8" stroke="#cccccc" stroke-width="1"/>
<line x1="1111" y1="699.6" x2="1134" y2="699.6" stroke="#0000ff" stroke-width="1.5"/>
<text x="1137.50" y="702.20" font-size="10.30" text-anchor="start" textLength="38.63" lengthAdjust="spacingAndGlyphs" fill="#000">x=2480</text>
</svg>
</body></html>
